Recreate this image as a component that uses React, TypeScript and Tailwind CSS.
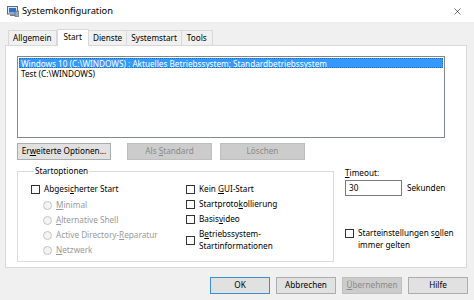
import { X } from 'lucide-react'

const font = { fontFamily: '"Noto Sans", "Open Sans", sans-serif' }

const Check = ({ label, className = '' }: { label: React.ReactNode; className?: string }) => (
  <div className={`flex items-start gap-[4px] ${className}`}>
    <span className="mt-[2px] w-[9px] h-[9px] shrink-0 border border-[#333] bg-white" />
    <span className="leading-[12px]">{label}</span>
  </div>
)

const Radio = ({ label }: { label: React.ReactNode }) => (
  <div className="flex items-center gap-[4px] h-[15px] text-[#9a9a9a]">
    <span className="w-[9px] h-[9px] rounded-full border border-[#c4c4c4] bg-[#f4f4f4]" />
    <span>{label}</span>
  </div>
)

const Btn = ({ children, disabled, def, w = 'w-[60px]' }: { children: React.ReactNode; disabled?: boolean; def?: boolean; w?: string }) => (
  <div
    className={`${w} h-[17px] flex items-center justify-center border ${
      disabled
        ? 'bg-[#cccccc] border-[#bfbfbf] text-[#8a8a8a]'
        : def
        ? 'bg-[#e1e1e1] border-[#3c8fd6] text-black'
        : 'bg-[#e1e1e1] border-[#adadad] text-black'
    }`}
  >
    <span>{children}</span>
  </div>
)

const App = () => {
  return (
    <div className="w-[474px] h-[300px] bg-[#f0f0f0] text-[8.2px] text-black flex flex-col overflow-hidden" style={font}>
      {/* Title bar */}
      <div className="h-[22px] bg-white flex items-center pl-[7px] pr-[11px]">
        <svg width="12" height="11" viewBox="0 0 12 11">
          <rect x="0.5" y="0.5" width="10" height="7.5" fill="#dfe6ee" stroke="#5a6b80" />
          <rect x="2" y="2" width="7" height="4.5" fill="#2f6fc9" />
          <rect x="3" y="8.5" width="5" height="1.5" fill="#6b7a8c" />
          <rect x="8" y="5" width="4" height="5.5" fill="#9aa7b5" stroke="#4c5a6a" strokeWidth="0.6" />
        </svg>
        <span className="ml-[3px] text-[9.3px]">Systemkonfiguration</span>
        <X className="ml-auto" size={11} strokeWidth={1.2} />
      </div>

      {/* Tabs */}
      <div className="h-[23px] flex items-end pl-[8px]">
        <div className="h-[15px] px-[4px] flex items-center border border-b-0 border-[#d9d9d9] bg-[#f0f0f0]">Allgemein</div>
        <div className="h-[17px] px-[6px] pb-[2px] flex items-center border border-b-0 border-[#d9d9d9] bg-white relative top-[1px]">Start</div>
        <div className="h-[15px] px-[4px] flex items-center border border-b-0 border-l-0 border-[#d9d9d9]">Dienste</div>
        <div className="h-[15px] px-[4px] flex items-center border border-b-0 border-l-0 border-[#d9d9d9]">Systemstart</div>
        <div className="h-[15px] px-[5px] flex items-center border border-b-0 border-l-0 border-[#d9d9d9]">Tools</div>
      </div>

      {/* Panel */}
      <div className="h-[223px] mx-[5px] w-[462px] bg-white border border-[#d9d9d9] pt-[10px] pl-[11px] flex flex-col">
        <div className="w-[428px] h-[82px] border border-[#828790] p-[1px]">
          <div className="h-[10px] bg-[#3399ff] text-white leading-[9px] pl-[1px] border border-dotted border-[#1e6fc0]">
            Windows 10 (C:\WINDOWS) : Aktuelles Betriebssystem; Standardbetriebssystem
          </div>
          <div className="leading-[11px] pl-[2px]">Test (C:\WINDOWS)</div>
        </div>

        <div className="flex mt-[5px]">
          <Btn w="w-[94px]">Er<u>w</u>eiterte Optionen...</Btn>
          <div className="ml-[16px]"><Btn disabled w="w-[85px]">Als <u>S</u>tandard</Btn></div>
          <div className="ml-[8px]"><Btn disabled w="w-[85px]">Löschen</Btn></div>
        </div>

        <div className="flex mt-[5px]">
          <fieldset className="w-[317px] h-[97px] border border-[#dcdcdc] pl-[13px] pt-[6px]">
            <legend className="ml-[3px] px-[1px] leading-[12px]">Startoptionen</legend>
            <div className="flex">
              <div className="w-[155px]">
                <Check label={<>Abgesi<u>c</u>herter Start</>} />
                <div className="pl-[12px] mt-[3px]">
                  <Radio label={<><u>M</u>inimal</>} />
                  <Radio label={<><u>A</u>lternative Shell</>} />
                  <Radio label={<>Active Directory-<u>R</u>eparatur</>} />
                  <Radio label={<><u>N</u>etzwerk</>} />
                </div>
              </div>
              <div className="flex flex-col gap-[3px]">
                <Check label={<>Kein <u>G</u>UI-Start</>} />
                <Check label={<>Startproto<u>k</u>ollierung</>} />
                <Check label={<>Basis<u>v</u>ideo</>} />
                <div className="flex items-center gap-[4px]">
                  <span className="w-[9px] h-[9px] shrink-0 border border-[#333] bg-white" />
                  <span className="leading-[12px]">B<u>e</u>triebssystem-<br />Startinformationen</span>
                </div>
              </div>
            </div>
          </fieldset>

          <div className="ml-[11px] pt-[2px] flex flex-col">
            <div className="leading-[12px]"><u>T</u>imeout:</div>
            <div className="flex items-center mt-[1px]">
              <div className="w-[57px] h-[16px] border border-[#7a7a7a] pl-[3px] leading-[14px]">30</div>
              <span className="ml-[5px]">Sekunden</span>
            </div>
            <Check className="mt-[31px]" label={<>Starteinstellungen s<u>o</u>llen<br />immer gelten</>} />
          </div>
        </div>
      </div>

      {/* Bottom buttons */}
      <div className="flex justify-end gap-[6px] pr-[6px] mt-[9px]">
        <Btn def>OK</Btn>
        <Btn>Abbrechen</Btn>
        <Btn disabled><u>Ü</u>bernehmen</Btn>
        <Btn>Hilfe</Btn>
      </div>
    </div>
  )
}

export default App
